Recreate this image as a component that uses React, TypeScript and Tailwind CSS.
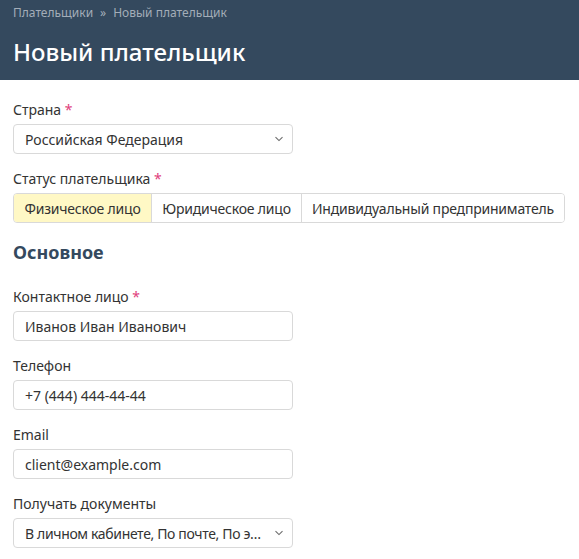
import React from "react";

const Chevron = () => (
  <svg width="10" height="6" viewBox="0 0 10 6" fill="none" className="shrink-0">
    <path d="M1.5 1.2 L5 4.6 L8.5 1.2" stroke="#6b6b6b" strokeWidth="1.1" />
  </svg>
);

const Label = ({ text, req }: { text: string; req?: boolean }) => (
  <div className="text-[14px] leading-[16px] text-[#333] mb-[6px] whitespace-nowrap">
    {text}
    {req && <span className="text-[#e0407b]"> *</span>}
  </div>
);

const Input = ({ value }: { value: string }) => (
  <div className="w-[280px] h-[30px] border border-[#d9d9d9] rounded-[4px] bg-white flex items-center px-[11px] text-[14px] text-[#333] whitespace-nowrap">
    {value}
  </div>
);

const Select = ({ value, tight }: { value: string; tight?: boolean }) => (
  <div className="w-[280px] h-[30px] border border-[#d9d9d9] rounded-[4px] bg-white flex items-center pl-[11px] pr-[8px] text-[14px] text-[#333] gap-2">
    <span className={tight ? "flex-1 whitespace-nowrap tracking-[-0.35px]" : "flex-1 whitespace-nowrap"}>{value}</span>
    <Chevron />
  </div>
);

export default function App() {
  return (
    <div className="w-[579px] min-h-[559px] bg-white" style={{ fontFamily: '"Noto Sans", sans-serif' }}>
      <div className="bg-[#34495e] h-[80px] px-[13px] pt-[4px]">
        <div className="text-[12px] leading-[18px] text-[#a3adb8] flex gap-[7px] whitespace-nowrap">
          <span>Плательщики</span>
          <span>»</span>
          <span>Новый плательщик</span>
        </div>
        <div className="text-[24px] leading-[32px] mt-[14px] text-white font-medium whitespace-nowrap">Новый плательщик</div>
      </div>
      <div className="px-[13px] pt-[22px]">
        <Label text="Страна" req />
        <Select value="Российская Федерация" />
        <div className="h-[17px]" />
        <Label text="Статус плательщика" req />
        <div className="flex w-[552px] h-[30px] border border-[#d9d9d9] rounded-[4px] overflow-hidden text-[14px] text-[#333] whitespace-nowrap tracking-[-0.2px]">
          <div className="w-[138px] bg-[#fff8c5] flex items-center justify-center border-r border-[#d9d9d9]">Физическое лицо</div>
          <div className="w-[150px] bg-white flex items-center justify-center border-r border-[#d9d9d9]">Юридическое лицо</div>
          <div className="flex-1 bg-white flex items-center justify-center">Индивидуальный предприниматель</div>
        </div>
        <div className="text-[18px] leading-[24px] font-bold text-[#34495e] mt-[17px] mb-[25px] whitespace-nowrap">Основное</div>
        <Label text="Контактное лицо" req />
        <Input value="Иванов Иван Иванович" />
        <div className="h-[17px]" />
        <Label text="Телефон" />
        <Input value="+7 (444) 444-44-44" />
        <div className="h-[17px]" />
        <Label text="Email" />
        <Input value="client@example.com" />
        <div className="h-[17px]" />
        <Label text="Получать документы" />
        <Select value="В личном кабинете, По почте, По э…" tight />
      </div>
    </div>
  );
}
